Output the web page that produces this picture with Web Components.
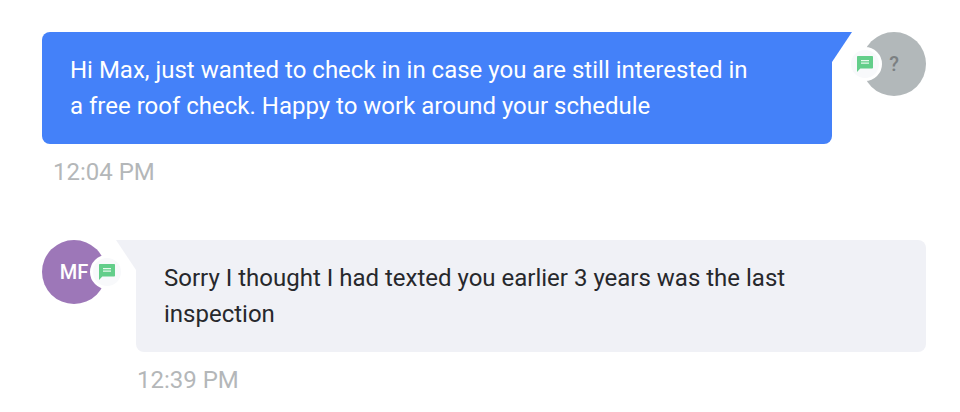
<!DOCTYPE html>
<html lang="en"><head><meta charset="utf-8"><title>Conversation</title>
<style>body{margin:0;background:#fff;font-family:Roboto,"Liberation Sans",sans-serif}</style></head>
<body>
<chat-thread>
<chat-message side="out" time="12:04 PM" initials="?">Hi Max, just wanted to check in in case you are still interested in a free roof check. Happy to work around your schedule</chat-message>
<chat-message side="in" time="12:39 PM" initials="MF">Sorry I thought I had texted you earlier 3 years was the last inspection</chat-message>
</chat-thread>
<script>
class ChatThread extends HTMLElement{constructor(){super();this.attachShadow({mode:'open'}).innerHTML=`
<style>:host{display:flex;flex-direction:column;gap:50px;padding:32px 34px 14px 42px}</style><slot></slot>`}}
class ChatAvatar extends HTMLElement{connectedCallback(){if(this.shadowRoot)return;this.attachShadow({mode:'open'}).innerHTML=`
<style>
:host{display:flex;position:relative;flex:none;box-sizing:border-box;width:64px;height:64px;border-radius:50%;align-items:center;justify-content:center;background:var(--avatar-bg);color:var(--avatar-fg);font-size:20px;line-height:24px;font-weight:500}
.badge{position:absolute;top:15px;left:var(--badge-left);box-sizing:border-box;width:34px;height:34px;border:3px solid #fff;border-radius:50%;background:#f8f9fb;display:flex;align-items:center;justify-content:center}
svg{display:block}
</style><slot></slot><span class="badge"><svg width="16" height="16" viewBox="0 0 16 16" aria-hidden="true"><path fill="#63ce8a" d="M.8 0h14.4q.8 0 .8.8v10.9q0 .8-.8.8H3.3L0 16V.8Q0 0 .8 0z"/><path fill="#e6f8ec" d="M4 4.1h8v1.2H4zM4 6.6h8v1.2H4z"/></svg></span>`}}
class ChatMessage extends HTMLElement{connectedCallback(){if(this.shadowRoot)return;this.attachShadow({mode:'open'}).innerHTML=`
<style>
:host{display:flex;align-items:flex-start;gap:30px;--bubble:#4481f9;--text:#fff;--avatar-bg:#b2b8ba;--avatar-fg:#7c8082;--badge-left:-14px}
:host([side=in]){flex-direction:row-reverse;--bubble:#f0f1f6;--text:#27282c;--avatar-bg:#9d77b8;--avatar-fg:#fff;--badge-left:48px}
.body{flex:1;min-width:0}
.bubble{position:relative;background:var(--bubble);color:var(--text);border-radius:8px 0 8px 8px;padding:20px 28px;font-size:24px;line-height:36px}
:host([side=in]) .bubble{border-radius:0 8px 8px 8px}
p{margin:0;max-width:680px}
.tail{position:absolute;top:0;left:100%;width:20px;height:30px;fill:var(--bubble)}
:host([side=in]) .tail{left:auto;right:100%;transform:scaleX(-1)}
time{display:block;padding:10px 11px 0;font-size:24px;line-height:36px;color:#b4b7b9}
:host([side=in]) time{padding-left:1px}
</style><div class="body"><div class="bubble"><p><slot></slot></p><svg class="tail" viewBox="0 0 20 30" aria-hidden="true"><path d="M-1 0H20L0 30h-1z"/></svg></div><time>${this.getAttribute('time')}</time></div><chat-avatar>${this.getAttribute('initials')}</chat-avatar>`}}
customElements.define('chat-thread',ChatThread);
customElements.define('chat-avatar',ChatAvatar);
customElements.define('chat-message',ChatMessage);
</script></body></html>
